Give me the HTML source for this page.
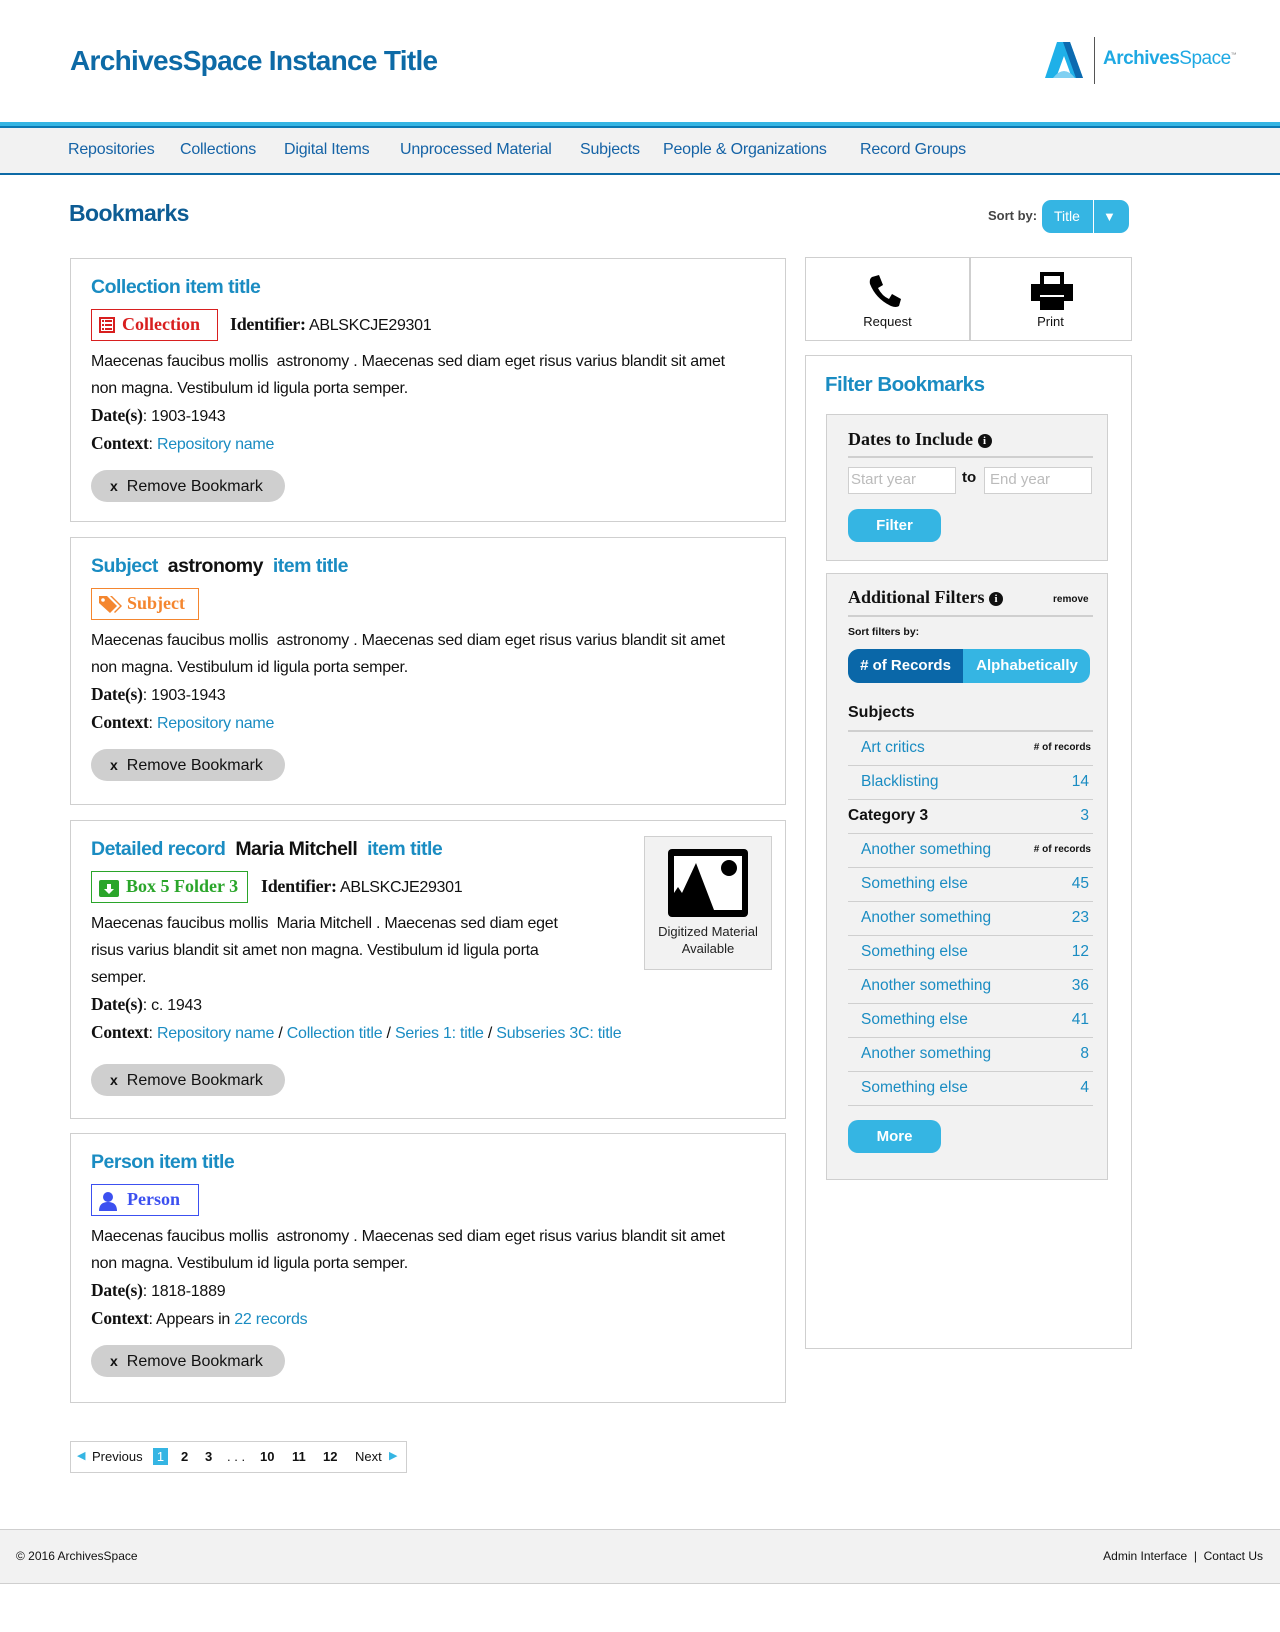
<!DOCTYPE html>
<html><head><meta charset="utf-8"><style>
*{box-sizing:border-box;margin:0;padding:0}
body{width:1280px;height:1632px;position:relative;background:#fff;font-family:"Liberation Sans",sans-serif;color:#111;overflow:hidden}
.abs{position:absolute}
a{color:#1a8cc2;text-decoration:none}
.title{left:70px;top:45px;font-size:28px;font-weight:bold;color:#0d6aa6;letter-spacing:-0.7px}
.bar{left:0;top:122px;width:1280px;height:6px;background:#35b5e3;border-bottom:2px solid #0b79b3}
.nav{left:0;top:128px;width:1280px;height:47px;background:#f2f2f2;border-bottom:2px solid #0d6aa6}
.nav span{position:absolute;top:13px;font-size:16px;color:#1563a6;letter-spacing:-0.2px}
h1.bm{position:absolute;left:69px;top:200px;font-size:23px;color:#0d5c94;letter-spacing:-0.6px}
.card{position:absolute;left:70px;width:716px;border:1.5px solid #cfcfcf;background:#fff}
.ct{position:absolute;left:20px;font-size:19.5px;font-weight:bold;color:#1a8cc2;letter-spacing:-0.5px}
.ct b{color:#111}
.badge{position:absolute;left:20px;height:32px;border:1.5px solid;font-family:"Liberation Serif",serif;font-weight:bold;font-size:18px;padding:0 6px 0 30px;line-height:29px}
.badge svg{position:absolute;left:6px;top:6px}
.ident{position:absolute;font-size:16px;letter-spacing:-0.3px}
.ident b{font-family:"Liberation Serif",serif;font-size:18px}
.txt{position:absolute;left:20px;font-size:16px;line-height:27px;color:#111;letter-spacing:-0.25px}
.txt b{font-family:"Liberation Serif",serif;font-size:17.5px}
.rm{position:absolute;left:20px;width:194px;height:32px;border-radius:16px;background:#cfcfcf;font-size:16px;line-height:32px;padding-left:19px;color:#111}
.rm i{font-style:normal;font-weight:bold;margin-right:9px;font-size:14px}
.box{position:absolute;border:1.5px solid #cfcfcf;background:#fff}
.inner{position:absolute;left:826px;width:282px;background:#f2f2f2;border:1.5px solid #cfcfcf}
.ser{font-family:"Liberation Serif",serif;font-weight:bold}
.btn{position:absolute;background:#35b5e3;color:#fff;border-radius:10px;font-weight:bold;text-align:center;font-size:15px}
.row{position:absolute;left:848px;width:245px;height:34px;border-bottom:1.5px solid #cfcfcf;font-size:15.5px;line-height:32px}
.row a{margin-left:13px}
.row .n{position:absolute;right:4px;top:0;color:#1a8cc2}
.row .r{position:absolute;right:2px;top:0;font-size:10px;font-weight:bold;color:#111}
.info{display:inline-block;width:14px;height:14px;border-radius:50%;background:#111;color:#fff;font-size:11px;line-height:14px;text-align:center;font-family:"Liberation Serif",serif;vertical-align:1px}
</style></head><body>
<div class="abs title">ArchivesSpace Instance Title</div>
<svg class="abs" style="left:1044px;top:42px" width="40" height="36" viewBox="0 0 40 36"><polygon points="13,0 26,0 39,36 28,36 20,14 12,36 1,36" fill="#1fb0e8"/><polygon points="19,0 26,0 39,36 32,36" fill="#0c6ab0"/><path d="M9,36 Q20,22 31,36Z" fill="#7fd0f2"/></svg>
<div class="abs" style="left:1094px;top:37px;width:1px;height:47px;background:#555"></div>
<div class="abs" style="left:1103px;top:48px;font-size:19px;color:#1fa9e3;letter-spacing:-0.5px"><b>Archives</b>Space<sup style="font-size:6px;color:#888">™</sup></div>
<div class="abs bar"></div>
<div class="abs nav">
<span style="left:68px">Repositories</span><span style="left:180px">Collections</span><span style="left:284px">Digital Items</span><span style="left:400px">Unprocessed Material</span><span style="left:580px">Subjects</span><span style="left:663px">People &amp; Organizations</span><span style="left:860px">Record Groups</span>
</div>
<h1 class="bm">Bookmarks</h1>
<div class="abs" style="left:988px;top:208px;font-size:13px;font-weight:bold;color:#444">Sort by:</div>
<div class="abs" style="left:1042px;top:200px;width:87px;height:33px;border-radius:9px;background:#35b5e3;color:#fff;font-size:14px;line-height:33px"><span style="margin-left:12px">Title</span><span style="position:absolute;left:51px;top:0;width:1px;height:33px;background:#fff"></span><span style="position:absolute;left:61px;top:0;font-size:13px">▼</span></div>

<!-- card 1 -->
<div class="card" style="top:258px;height:264px">
<div class="ct" style="top:17px">Collection item title</div>
<div class="badge" style="top:50px;color:#d81f1f;border-color:#d81f1f;width:127px"><svg width="18" height="18" viewBox="0 0 18 18"><rect x="1" y="1" width="16" height="16" fill="#d81f1f"/><rect x="3" y="3" width="12" height="12" fill="#fff"/><g fill="#d81f1f"><rect x="4" y="4" width="2" height="2"/><rect x="7" y="4" width="7" height="2"/><rect x="4" y="8" width="2" height="2"/><rect x="7" y="8" width="7" height="2"/><rect x="4" y="12" width="2" height="2"/><rect x="7" y="12" width="7" height="2"/></g></svg>Collection</div>
<div class="ident" style="left:159px;top:55px"><b>Identifier:</b> ABLSKCJE29301</div>
<div class="txt" style="top:89px;width:650px">Maecenas faucibus mollis &nbsp;astronomy . Maecenas sed diam eget risus varius blandit sit amet non magna. Vestibulum id ligula porta semper.<br><b>Date(s)</b>: 1903-1943<br><b>Context</b>: <a>Repository name</a></div>
<div class="rm" style="top:211px"><i>x</i>Remove Bookmark</div>
</div>

<!-- card 2 -->
<div class="card" style="top:537px;height:268px">
<div class="ct" style="top:17px">Subject &nbsp;<b>astronomy</b> &nbsp;item title</div>
<div class="badge" style="top:50px;color:#f4862f;border-color:#f4862f;width:108px;padding-left:35px"><svg width="26" height="20" viewBox="0 0 26 20"><path d="M1,1 H9 L19,11 L12,18 L1,8Z" fill="#f4862f"/><circle cx="5" cy="5" r="1.8" fill="#fff"/><path d="M12,1 H14 L24,11 L17,18 L16,17 L22,11Z" fill="#f4862f"/></svg>Subject</div>
<div class="txt" style="top:89px;width:650px">Maecenas faucibus mollis &nbsp;astronomy . Maecenas sed diam eget risus varius blandit sit amet non magna. Vestibulum id ligula porta semper.<br><b>Date(s)</b>: 1903-1943<br><b>Context</b>: <a>Repository name</a></div>
<div class="rm" style="top:211px"><i>x</i>Remove Bookmark</div>
</div>

<!-- card 3 -->
<div class="card" style="top:820px;height:299px">
<div class="ct" style="top:17px">Detailed record &nbsp;<b>Maria Mitchell</b> &nbsp;item title</div>
<div class="badge" style="top:50px;color:#2aa52a;border-color:#2aa52a;width:157px;padding-left:34px"><svg width="22" height="20" viewBox="0 0 22 20"><rect x="1" y="2" width="20" height="17" rx="2" fill="#2aa52a"/><path d="M9,6 h4 v5 h3 l-5,5 l-5,-5 h3z" fill="#fff"/></svg>Box 5 Folder 3</div>
<div class="ident" style="left:190px;top:55px"><b>Identifier:</b> ABLSKCJE29301</div>
<div class="txt" style="top:89px;width:490px">Maecenas faucibus mollis &nbsp;Maria Mitchell . Maecenas sed diam eget risus varius blandit sit amet non magna. Vestibulum id ligula porta semper.</div>
<div class="txt" style="top:170px;width:680px"><b>Date(s)</b>: c. 1943<br><b>Context</b>: <a>Repository name</a> / <a>Collection title</a> / <a>Series 1: title</a> / <a>Subseries 3C: title</a></div>
<div class="rm" style="top:243px"><i>x</i>Remove Bookmark</div>
<div style="position:absolute;left:573px;top:15px;width:128px;height:134px;background:#f2f2f2;border:1.5px solid #cfcfcf;text-align:center;font-size:13px;line-height:17px;color:#222">
<svg style="display:block;margin:12px auto 6px" width="80" height="68" viewBox="0 0 80 68"><rect x="0" y="0" width="80" height="68" rx="4" fill="#000"/><rect x="6" y="7" width="68" height="54" fill="#fff"/><path d="M6,61 V44 L10,38 L14,44 L28,14 L46,61Z" fill="#000"/><circle cx="61" cy="19" r="8" fill="#000"/></svg>Digitized Material<br>Available</div>
</div>

<!-- card 4 -->
<div class="card" style="top:1133px;height:270px">
<div class="ct" style="top:17px">Person item title</div>
<div class="badge" style="top:50px;color:#3c50f0;border-color:#3c50f0;width:108px;padding-left:35px"><svg width="20" height="20" viewBox="0 0 20 20"><circle cx="10" cy="6" r="5" fill="#3c50f0"/><path d="M1,20 Q1,11 10,11 Q19,11 19,20Z" fill="#3c50f0"/></svg>Person</div>
<div class="txt" style="top:89px;width:650px">Maecenas faucibus mollis &nbsp;astronomy . Maecenas sed diam eget risus varius blandit sit amet non magna. Vestibulum id ligula porta semper.<br><b>Date(s)</b>: 1818-1889<br><b>Context</b>: Appears in <a>22 records</a></div>
<div class="rm" style="top:211px"><i>x</i>Remove Bookmark</div>
</div>

<!-- right -->
<div class="box" style="left:805px;top:257px;width:327px;height:84px">
<div style="position:absolute;left:163px;top:0;width:1.5px;height:82px;background:#cfcfcf"></div>
<svg style="position:absolute;left:62px;top:16px" width="34" height="34" viewBox="0 0 34 34"><path d="M4,3 L11,1 L15,11 L10,14 Q14,22 21,25 L24,20 L33,25 L31,32 Q28,34 23,32 Q8,25 2,10 Q1,5 4,3Z" fill="#000"/></svg>
<div style="position:absolute;left:0;width:163px;top:56px;text-align:center;font-size:13px">Request</div>
<svg style="position:absolute;left:225px;top:14px" width="42" height="38" viewBox="0 0 42 38"><rect x="9" y="0" width="24" height="12" fill="#000"/><rect x="13" y="4" width="16" height="8" fill="#fff"/><rect x="0" y="12" width="42" height="17" fill="#000"/><rect x="9" y="25" width="24" height="13" fill="#000"/><rect x="9" y="23" width="24" height="2" fill="#fff"/></svg>
<div style="position:absolute;left:163px;width:163px;top:56px;text-align:center;font-size:13px">Print</div>
</div>

<div class="box" style="left:805px;top:355px;width:327px;height:994px"></div>
<div class="abs" style="left:825px;top:373px;font-size:20.5px;font-weight:bold;color:#1a8cc2;letter-spacing:-0.5px">Filter Bookmarks</div>

<div class="inner" style="top:414px;height:147px"></div>
<div class="abs ser" style="left:848px;top:429px;font-size:18px">Dates to Include <span class="info">i</span></div>
<div class="abs" style="left:848px;top:456px;width:245px;height:1.5px;background:#cfcfcf"></div>
<div class="abs" style="left:848px;top:467px;width:108px;height:27px;background:#fff;border:1.5px solid #cfcfcf;color:#bbb;font-size:15px;padding:3px 2px">Start year</div>
<div class="abs" style="left:962px;top:469px;font-size:15px;font-weight:bold">to</div>
<div class="abs" style="left:984px;top:467px;width:108px;height:27px;background:#fff;border:1.5px solid #cfcfcf;color:#bbb;font-size:15px;padding:3px 5px">End year</div>
<div class="btn" style="left:848px;top:509px;width:93px;height:33px;line-height:33px">Filter</div>

<div class="inner" style="top:573px;height:607px"></div>
<div class="abs ser" style="left:848px;top:587px;font-size:18px">Additional Filters <span class="info">i</span></div>
<div class="abs" style="left:1053px;top:594px;font-size:10px;font-weight:bold">remove</div>
<div class="abs" style="left:848px;top:615px;width:245px;height:1.5px;background:#cfcfcf"></div>
<div class="abs" style="left:848px;top:626px;font-size:10.5px;font-weight:bold">Sort filters by:</div>
<div class="abs" style="left:848px;top:649px;width:242px;height:34px;border-radius:11px;overflow:hidden;background:#35b5e3;color:#fff;font-weight:bold;font-size:15px;line-height:34px">
<div style="position:absolute;left:0;top:0;width:115px;height:34px;background:#0a67a8;text-align:center"># of Records</div>
<div style="position:absolute;left:116px;top:0;width:126px;text-align:center">Alphabetically</div></div>
<div class="abs" style="left:848px;top:704px;font-size:16px;font-weight:bold">Subjects</div>
<div class="abs" style="left:848px;top:730px;width:245px;height:1.5px;background:#cfcfcf"></div>
<div class="row" style="top:732px"><a>Art critics</a><span class="r"># of records</span></div>
<div class="row" style="top:766px"><a>Blacklisting</a><span class="n">14</span></div>
<div class="row" style="top:800px;font-weight:bold">Category 3<span class="n" style="font-weight:normal">3</span></div>
<div class="row" style="top:834px"><a>Another something</a><span class="r"># of records</span></div>
<div class="row" style="top:868px"><a>Something else</a><span class="n">45</span></div>
<div class="row" style="top:902px"><a>Another something</a><span class="n">23</span></div>
<div class="row" style="top:936px"><a>Something else</a><span class="n">12</span></div>
<div class="row" style="top:970px"><a>Another something</a><span class="n">36</span></div>
<div class="row" style="top:1004px"><a>Something else</a><span class="n">41</span></div>
<div class="row" style="top:1038px"><a>Another something</a><span class="n">8</span></div>
<div class="row" style="top:1072px"><a>Something else</a><span class="n">4</span></div>
<div class="btn" style="left:848px;top:1120px;width:93px;height:33px;line-height:33px">More</div>

<!-- pagination -->
<div class="abs" style="left:70px;top:1441px;width:337px;height:32px;border:1.5px solid #cfcfcf;font-size:13px;line-height:29px">
<span style="position:absolute;left:6px;color:#35b5e3;font-size:11px">◀</span><span style="position:absolute;left:21px">Previous</span>
<span style="position:absolute;left:82px;top:6px;width:15px;height:17px;background:#35b5e3;color:#fff;text-align:center;line-height:17px">1</span>
<span style="position:absolute;left:110px;font-weight:bold">2</span><span style="position:absolute;left:134px;font-weight:bold">3</span><span style="position:absolute;left:156px">. . .</span>
<span style="position:absolute;left:189px;font-weight:bold">10</span><span style="position:absolute;left:221px;font-weight:bold">11</span><span style="position:absolute;left:252px;font-weight:bold">12</span>
<span style="position:absolute;left:284px">Next</span><span style="position:absolute;left:318px;color:#35b5e3;font-size:11px">▶</span></div>

<div class="abs" style="left:0;top:1529px;width:1280px;height:55px;background:#f2f2f2;border-top:1.5px solid #cfcfcf;border-bottom:1.5px solid #cfcfcf;font-size:12px;line-height:52px">
<span style="position:absolute;left:16px">© 2016 ArchivesSpace</span>
<span style="position:absolute;right:17px">Admin Interface &nbsp;| &nbsp;Contact Us</span></div>
</body></html>
